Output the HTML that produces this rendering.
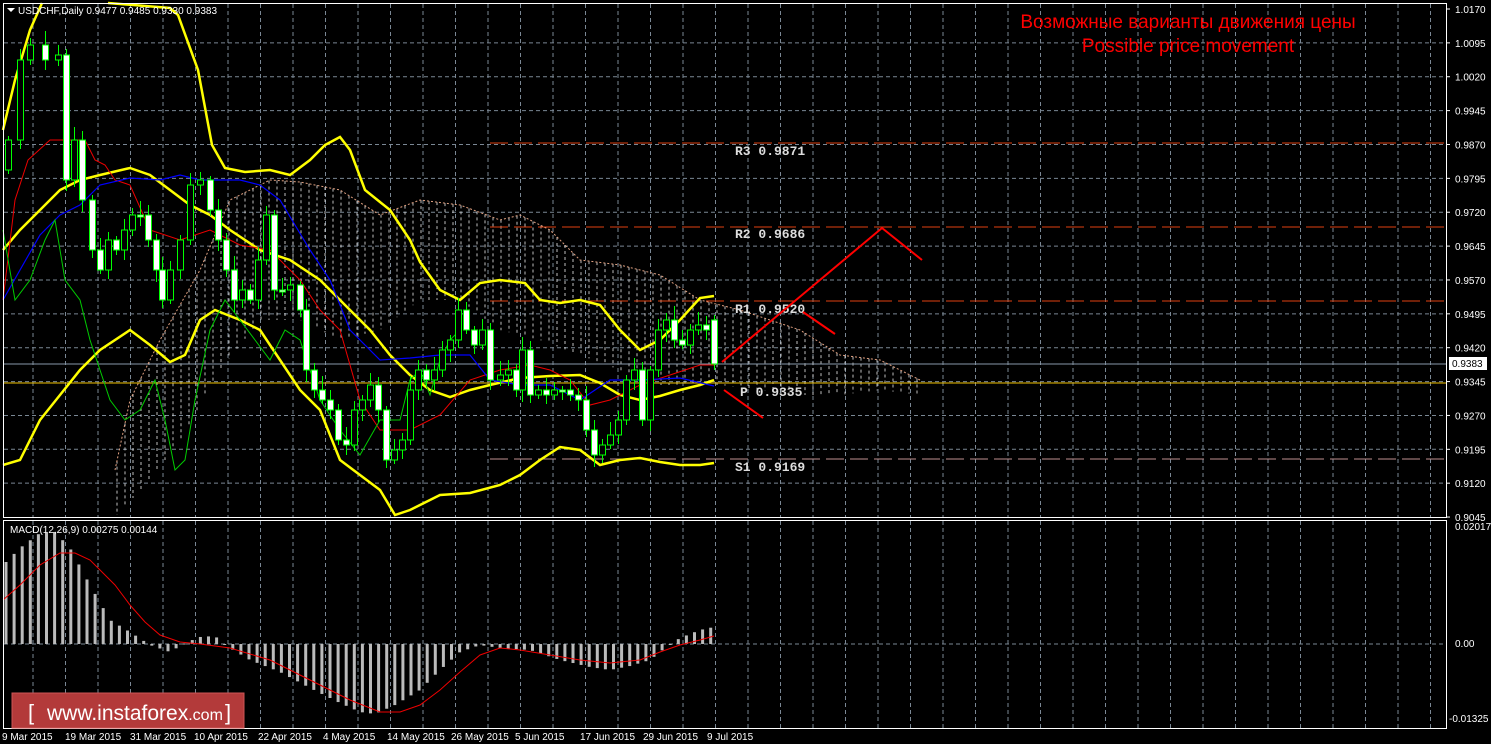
<!DOCTYPE html>
<html><head><meta charset="utf-8"><style>
html,body{margin:0;padding:0;background:#000;width:1491px;height:744px;overflow:hidden}
svg{display:block}
text{font-family:"Liberation Sans",sans-serif}
text.mono{font-family:"Liberation Mono",monospace}
</style></head><body>
<svg id="s" width="1491" height="744" xmlns="http://www.w3.org/2000/svg">
<rect width="1491" height="744" fill="#000"/>
<g id="grid"></g>
<g id="cloud"></g>
<g id="lines"></g>
<g id="candles"></g>
<g id="macd"></g>
<rect x="3.5" y="3.5" width="1443" height="514" fill="none" stroke="#fff" stroke-width="1"/>
<rect x="3.5" y="520.5" width="1443" height="208" fill="none" stroke="#fff" stroke-width="1"/>
<g id="axis" font-size="10" fill="#fff"></g>
<polygon points="7,8 15,8 11,12" fill="#fff"/>
<text x="18" y="14" font-size="10" fill="#fff">USDCHF,Daily  0.9477 0.9485 0.9330 0.9383</text>
<text x="10" y="533" font-size="10" fill="#fff">MACD(12,26,9) 0.00275 0.00144</text>
<text x="1188" y="28" font-size="19" fill="#f00" text-anchor="middle">Возможные варианты движения цены</text>
<text x="1188" y="52" font-size="19" fill="#f00" text-anchor="middle">Possible price movement</text>
<g font-size="13" fill="#ddd" font-weight="bold">
<text class="mono" x="735" y="155">R3 0.9871</text>
<text class="mono" x="735" y="238">R2 0.9686</text>
<text class="mono" x="735" y="313">R1 0.9520</text>
<text class="mono" x="740" y="396">P 0.9335</text>
<text class="mono" x="735" y="471">S1 0.9169</text>
</g>
<g stroke="#f00" stroke-width="2" fill="none">
<polyline points="722,362 882,228 922,260"/>
<line x1="803" y1="312" x2="835" y2="334"/>
<line x1="724" y1="390" x2="763" y2="418"/>
</g>
<rect x="12" y="693" width="232" height="35" fill="#b33a3a" stroke="#c55" stroke-width="1"/>
<text x="28" y="720" font-size="22" fill="#fff">[</text>
<text x="47" y="720" font-size="21" fill="#fff">www.instaforex<tspan font-size="16">.com</tspan></text>
<text x="225" y="720" font-size="22" fill="#fff">]</text>
</svg>
<script>
(function(){
var NS="http://www.w3.org/2000/svg";
function el(p,t,a){var e=document.createElementNS(NS,t);for(var k in a)e.setAttribute(k,a[k]);p.appendChild(e);return e;}
var G=document.getElementById('grid'),A=document.getElementById('axis');
var prices=["1.0170","1.0095","1.0020","0.9945","0.9870","0.9795","0.9720","0.9645","0.9570","0.9495","0.9420","0.9345","0.9270","0.9195","0.9120","0.9045"];
for(var i=0;i<16;i++){var y=9+i*33.87;
 if(i>0&&i<15)el(G,'line',{x1:4,x2:1446,y1:y,y2:y,stroke:'#7a8794','stroke-dasharray':'4,3','stroke-width':1});
 el(A,'line',{x1:1446,x2:1450,y1:y,y2:y,stroke:'#fff'});
 var t=el(A,'text',{x:1455,y:y+4});t.textContent=prices[i];}
el(G,'line',{x1:4,x2:1446,y1:644,y2:644,stroke:'#7a8794','stroke-dasharray':'4,3'});
for(var x=33;x<1446;x+=32.5){el(G,'line',{x1:x,x2:x,y1:4,y2:517,stroke:'#7a8794','stroke-dasharray':'4,3'});el(G,'line',{x1:x,x2:x,y1:521,y2:728,stroke:'#7a8794','stroke-dasharray':'4,3'});}
[['0.02017',530],['0.00',647],['-0.01325',722]].forEach(function(a){var t=el(A,'text',{x:a[0][0]=='-'?1449:1455,y:a[1]});t.textContent=a[0];});
var dates=[['9 Mar 2015',2],['19 Mar 2015',65],['31 Mar 2015',130],['10 Apr 2015',194],['22 Apr 2015',258],['4 May 2015',323],['14 May 2015',387],['26 May 2015',451],['5 Jun 2015',515],['17 Jun 2015',580],['29 Jun 2015',643],['9 Jul 2015',707]];
dates.forEach(function(d){var t=el(A,'text',{x:d[1],y:740});t.textContent=d[0];});
var L=document.getElementById('lines');
el(L,'line',{x1:490,x2:1446,y1:143,y2:143,stroke:'#e04010','stroke-dasharray':'18,6'});
el(L,'line',{x1:490,x2:1446,y1:227,y2:227,stroke:'#e04010','stroke-dasharray':'18,6'});
el(L,'line',{x1:490,x2:1446,y1:301,y2:301,stroke:'#e04010','stroke-dasharray':'18,6'});
el(L,'line',{x1:490,x2:1446,y1:459,y2:459,stroke:'#c09090','stroke-dasharray':'18,6'});
el(L,'line',{x1:4,x2:1446,y1:383,y2:383,stroke:'#f0c000'});
el(L,'line',{x1:4,x2:1446,y1:364,y2:364,stroke:'#8899aa'});
el(A,'rect',{x:1449,y:357,width:38,height:13,fill:'#fff'});
var tt=el(A,'text',{x:1452,y:367,fill:'#000'});tt.textContent='0.9383';
function interp(pts,x){if(x<=pts[0][0])return pts[0][1];for(var i=1;i<pts.length;i++){if(x<=pts[i][0]){var a=pts[i-1],b=pts[i];return a[1]+(b[1]-a[1])*(x-a[0])/(b[0]-a[0]);}}return pts[pts.length-1][1];}
function pl(pts,c,w,d){var a={points:pts.map(function(p){return p.join(',')}).join(' '),fill:'none',stroke:c,'stroke-width':w};if(d)a['stroke-dasharray']=d;el(L,'polyline',a);}
var C=document.getElementById('cloud');
var ctop=[[115,470],[130,400],[160,340],[200,270],[230,200],[270,180],[300,182],[340,190],[380,215],[420,200],[460,205],[500,220],[520,215],[550,230],[580,260],[620,265],[660,275],[700,300],[740,310],[800,330],[840,355],[880,360],[920,380]];
var cbot=[[115,517],[150,480],[180,440],[220,370],[260,320],[300,320],[340,340],[380,330],[420,300],[460,300],[500,330],[540,340],[580,355],[620,370],[660,385],[720,385],[760,390],[800,395],[840,395],[880,390],[920,395]];
for(var x=117;x<920;x+=8){var a=interp(ctop,x),b=interp(cbot,x);if(b<a){var t=a;a=b;b=t;}el(C,'line',{x1:x,x2:x,y1:a,y2:b,stroke:'#eee','stroke-dasharray':'3,3','stroke-width':1,opacity:0.8});}
pl(ctop,'#e0a080',1,'2,2');
pl([[3,130],[15,80],[30,30],[42,3]],'#ff0',2.5);
pl([[108,3],[170,8],[178,15],[198,70],[212,145],[225,168],[245,172],[270,170],[290,175],[310,160],[325,145],[340,137],[350,150],[365,190],[390,210],[410,240],[420,262],[440,290],[460,300],[480,283],[500,280],[525,283],[540,300],[560,303],[580,300],[600,305],[620,330],[640,350],[660,340],[680,320],[700,298],[714,296]],'#ff0',2.5);
pl([[3,250],[20,230],[40,210],[60,190],[80,180],[100,175],[130,168],[150,175],[170,190],[190,205],[210,215],[230,230],[260,250],[290,260],[320,280],[350,310],[370,330],[390,355],[410,375],[430,390],[450,397],[470,390],[490,385],[520,378],[550,376],[580,375],[600,383],[620,395],[640,400],[660,396],[680,390],[700,385],[714,380]],'#ff0',2.5);
pl([[3,465],[20,460],[40,420],[60,395],[80,370],[100,350],[130,330],[150,345],[170,362],[185,355],[200,320],[215,310],[240,320],[260,330],[280,360],[300,390],[320,410],[340,460],[360,475],[380,490],[395,515],[410,510],[440,495],[470,493],[500,485],[520,475],[540,460],[560,447],[580,450],[600,465],[620,460],[640,458],[660,462],[680,465],[700,465],[714,463]],'#ff0',2.5);
pl([[3,300],[15,200],[28,160],[50,140],[85,140],[95,160],[105,165],[115,180],[130,185],[150,230],[180,240],[210,230],[240,245],[270,250],[300,280],[320,310],[340,330],[360,400],[380,430],[410,430],[440,415],[470,380],[500,370],[530,365],[550,370],[570,380],[590,405],[610,400],[640,385],[670,375],[700,365],[714,365]],'#e00',1);
pl([[3,300],[20,270],[40,235],[60,215],[80,205],[100,185],[130,178],[160,180],[180,175],[200,180],[240,180],[260,185],[280,200],[310,250],[330,280],[350,330],[380,360],[410,358],[440,355],[470,355],[490,380],[520,385],[550,385],[580,400],[610,380],[640,380],[680,378],[714,386]],'#00f',1.2);
pl([[3,230],[15,300],[30,280],[45,240],[55,220],[65,280],[80,300],[90,340],[100,370],[110,400],[125,420],[140,410],[155,380],[165,420],[175,470],[185,460],[195,400],[210,330],[225,300],[240,320],[255,340],[270,360],[285,330],[300,340],[320,400],[340,430],[360,455],[380,420],[400,420],[410,380],[420,370],[430,395],[440,360],[450,340],[460,330]],'#0c0',1);
var key=[[8,140],[20,60],[30,45],[45,60],[58,55],[66,180],[74,140],[82,200],[92,250],[100,270],[108,240],[116,250],[124,230],[132,215],[140,215],[148,240],[156,270],[162,300],[170,270],[180,240],[190,185],[200,180],[210,210],[218,240],[226,270],[234,300],[242,290],[250,300],[258,260],[266,215],[274,290],[282,290],[290,285],[300,310],[306,370],[314,390],[322,400],[330,410],[338,440],[346,445],[354,410],[362,400],[370,385],[378,410],[386,460],[394,450],[402,440],[410,390],[418,370],[426,380],[434,370],[442,350],[450,340],[458,310],[466,330],[474,345],[482,330],[490,380],[500,375],[508,370],[516,390],[522,350],[530,395],[538,390],[546,395],[554,390],[562,390],[570,395],[578,400],[586,430],[594,455],[602,445],[610,435],[618,420],[626,380],[634,370],[642,420],[650,370],[658,330],[666,320],[674,340],[682,345],[690,330],[698,325],[706,330],[714,364]];
var K=document.getElementById('candles');var prev=170;
key.forEach(function(k,i){var o=prev,c=k[1];if(i==key.length-1)o=320;var hi=Math.min(o,c)-4-(i*7%11),lo=Math.max(o,c)+4+(i*5%9);
 el(K,'line',{x1:k[0]+.5,x2:k[0]+.5,y1:hi,y2:lo,stroke:'#0f0'});
 var up=c<o;var h=Math.max(Math.abs(c-o),2);
 el(K,'rect',{x:k[0]-2.5,y:Math.min(o,c),width:6,height:h,fill:up?'#000':'#fff',stroke:'#0f0','stroke-width':1});prev=c;});
var M=document.getElementById('macd');
var hk=[[3,565],[20,548],[40,533],[55,532],[70,548],[90,585],[110,620],[130,632],[150,645],[170,652],[185,643],[200,637],[215,636],[225,645],[250,660],[280,672],[310,688],[340,703],[360,712],[375,714],[395,705],[420,690],[440,670],[460,652],[480,645],[500,648],[530,650],[560,660],[590,667],[610,670],[630,666],[650,660],[665,648],[680,638],[700,630],[714,627]];
for(var x=6;x<=714;x+=8.1){var v=interp(hk,x);el(M,'rect',{x:x-1.5,y:Math.min(v,644),width:3,height:Math.max(Math.abs(v-644),1),fill:'#bbb'});}
el(M,'polyline',{points:'3,600 20,585 40,565 60,553 75,553 90,560 100,570 115,585 130,605 145,622 160,635 180,642 200,644 230,648 270,660 310,680 350,700 380,712 400,712 420,705 440,690 460,672 480,655 500,648 520,650 550,655 580,660 610,663 640,660 660,652 680,645 700,640 714,636',fill:'none',stroke:'#e00','stroke-width':1});
})();
</script>
</body></html>
